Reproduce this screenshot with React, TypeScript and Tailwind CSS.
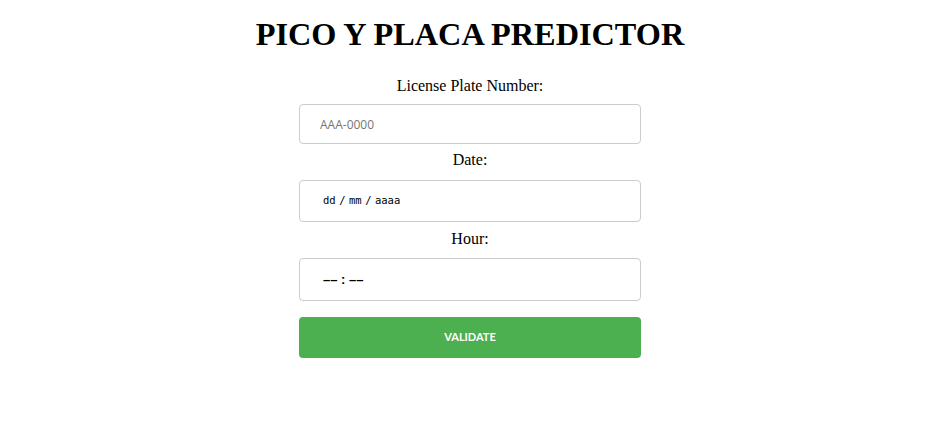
import { useState } from 'react';

export default function App() {
  const [plate, setPlate] = useState('');

  return (
    <div className="min-h-screen bg-white pl-[2px] font-['Liberation_Serif',serif] text-black">
      <div className="mx-auto flex w-[342px] flex-col items-stretch pt-[16px]">
        {/* Title */}
        <h1 className="-mx-[100px] whitespace-nowrap text-center text-[32.3px] font-bold leading-[37px]">
          PICO Y PLACA PREDICTOR
        </h1>

        {/* Plate */}
        <label className="mt-[24px] text-center text-[16px] leading-[18px]">License Plate Number:</label>
        <input
          value={plate}
          onChange={(e) => setPlate(e.target.value)}
          placeholder="AAA-0000"
          className="mt-[9px] h-[40px] rounded-[4px] border border-[#ccc] px-[20px] font-['Open_Sans',sans-serif] text-[12px] text-black outline-none placeholder:text-[#757575]"
        />

        {/* Date */}
        <label className="mt-[7px] text-center text-[16px] leading-[18px]">Date:</label>
        <div className="mt-[11px] flex h-[42px] items-center gap-[3.5px] rounded-[4px] border border-[#ccc] px-[23px] font-['DejaVu_Sans_Mono',monospace] text-[10.5px]">
          <span>dd</span>
          <span>/</span>
          <span>mm</span>
          <span>/</span>
          <span>aaaa</span>
        </div>

        {/* Hour */}
        <label className="mt-[8px] text-center text-[16px] leading-[18px]">Hour:</label>
        <div className="mt-[10px] flex h-[43px] items-center whitespace-pre rounded-[4px] border border-[#ccc] px-[23px] font-['Liberation_Sans',sans-serif] text-[13px] font-bold">
          –– : ––
        </div>

        {/* Submit */}
        <button className="mt-[16px] h-[41px] rounded-[4px] bg-[#4caf50] font-['Lato',sans-serif] text-[11px] font-bold text-white">
          VALIDATE
        </button>
      </div>
    </div>
  );
}
